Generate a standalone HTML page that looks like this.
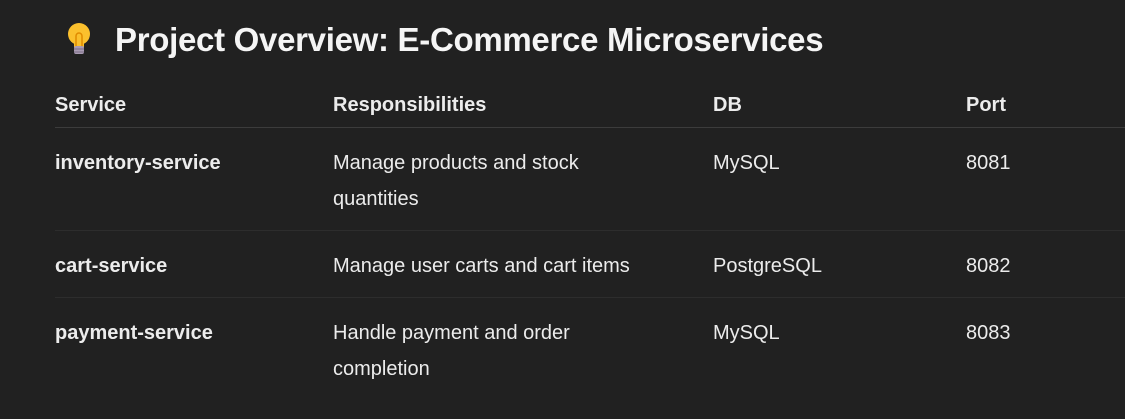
<!DOCTYPE html>
<html><head><meta charset="utf-8"><style>
body{margin:0;background:#212121;width:1125px;height:419px;overflow:hidden;font-family:"Liberation Sans",sans-serif;color:#ececec}
h1{position:absolute;left:115px;top:18px;margin:0;font-size:33px;font-weight:bold;color:#f5f5f5;line-height:44px;white-space:nowrap;letter-spacing:-0.3px}
svg{position:absolute;left:64px;top:22px}
table{position:absolute;left:55px;top:81px;width:1070px;border-collapse:collapse;font-size:20px}
td,th{text-align:left;vertical-align:top;padding:17px 0 13px;line-height:36px}
th{font-weight:bold;padding:6px 0 4px;border-bottom:1px solid #3c3c3c}
td{border-bottom:1px solid #2d2d2d}
tr:last-child td{border-bottom:none}
td:first-child{font-weight:bold}
</style></head><body>
<svg width="30" height="34" viewBox="0 0 30 34">
<circle cx="15" cy="12" r="11" fill="#fbc02d"/>
<rect x="10" y="18" width="10" height="7" fill="#fbc02d"/>
<path d="M12 24 V14 a3 3 0 1 1 6 0 V24" fill="none" stroke="#e08a00" stroke-width="1.5"/>
<rect x="10" y="24" width="10" height="8" rx="2" fill="#a99bb3"/>
<line x1="10" y1="27" x2="20" y2="27" stroke="#7b6c86"/><line x1="10" y1="30" x2="20" y2="30" stroke="#7b6c86"/>
</svg>
<h1>Project Overview: E-Commerce Microservices</h1>
<table>
<colgroup><col style="width:278px"><col style="width:380px"><col style="width:253px"><col></colgroup>
<tr><th>Service</th><th>Responsibilities</th><th>DB</th><th>Port</th></tr>
<tr><td>inventory-service</td><td>Manage products and stock<br>quantities</td><td>MySQL</td><td>8081</td></tr>
<tr><td>cart-service</td><td>Manage user carts and cart items</td><td>PostgreSQL</td><td>8082</td></tr>
<tr><td>payment-service</td><td>Handle payment and order<br>completion</td><td>MySQL</td><td>8083</td></tr>
</table>
</body></html>
